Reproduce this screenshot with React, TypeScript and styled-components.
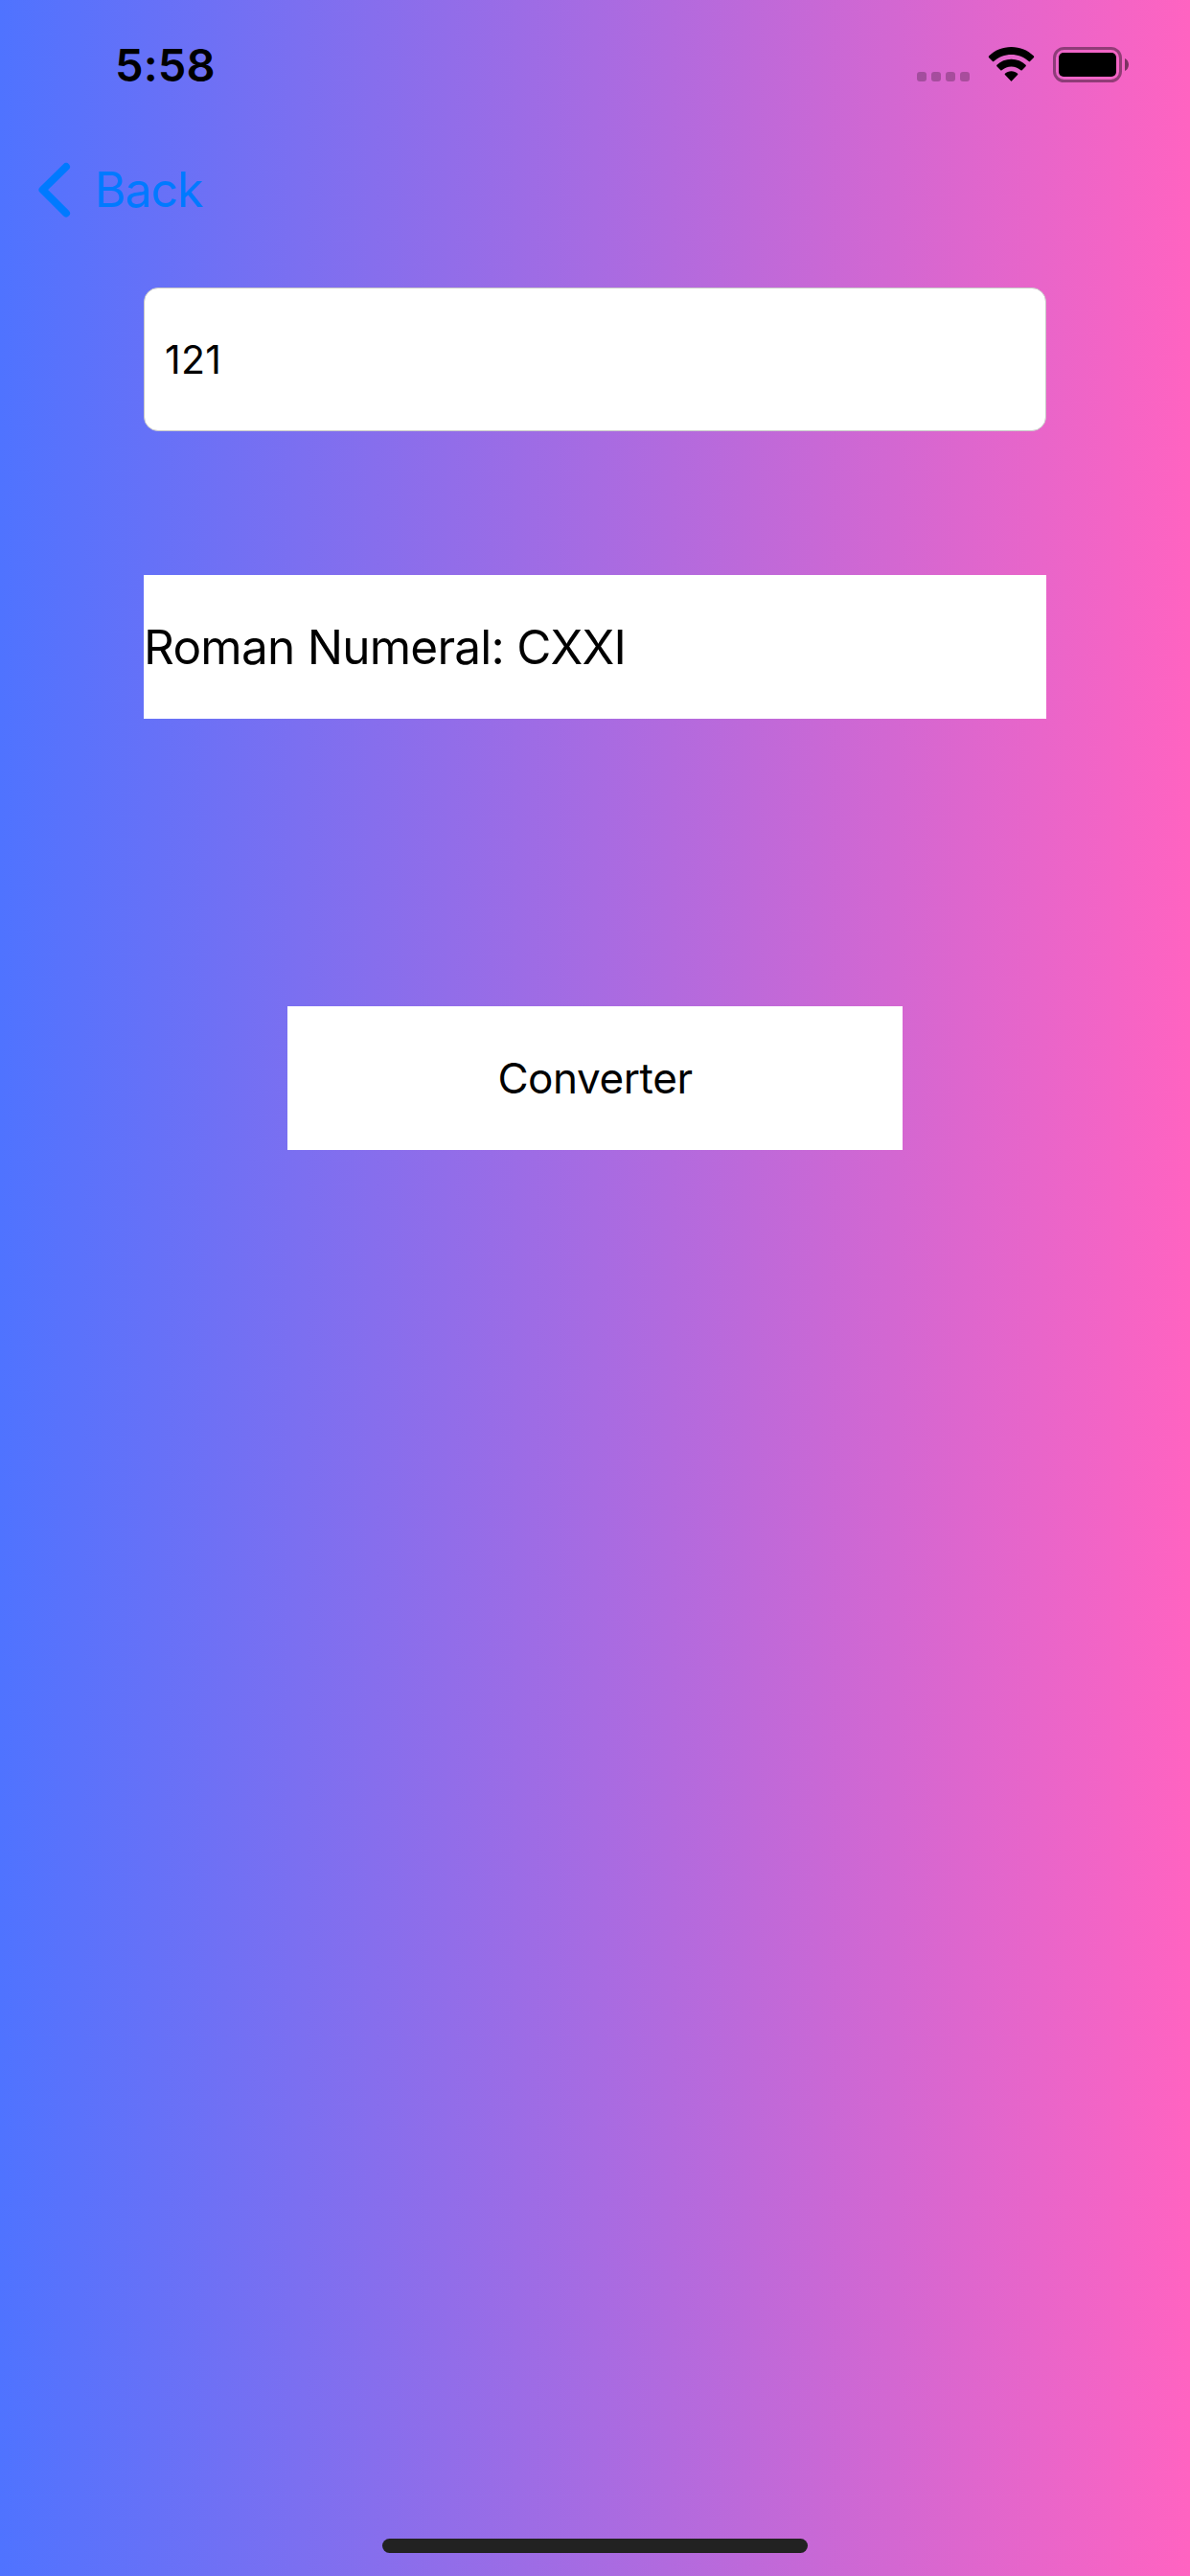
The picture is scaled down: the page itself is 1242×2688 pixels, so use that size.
import React, { useState } from "react";
import styled, { createGlobalStyle } from "styled-components";

const GlobalStyle = createGlobalStyle`
  *, *::before, *::after { box-sizing: border-box; }
  body { margin: 0; }
`;

const Screen = styled.div`
  display: flex;
  flex-direction: column;
  width: 1242px;
  height: 2688px;
  overflow: hidden;
  color: #000;
  font-family: Inter, "Liberation Sans", sans-serif;
  background: linear-gradient(90deg, #4f73ff 0%, #a76be2 50%, #ff63c1 100%);
`;

const StatusBar = styled.header`
  display: flex;
  justify-content: space-between;
  height: 132px;
  padding: 0 64px 0 120px;
`;

const Clock = styled.time`
  padding-top: 38px;
  font-size: 47px;
  font-weight: 600;
  line-height: 60px;
  letter-spacing: 0.1px;
`;

const StatusIcons = styled.div`
  display: flex;
  align-items: flex-start;
  padding-top: 49px;
`;

const SignalDots = styled.div`
  display: flex;
  gap: 5px;
  margin: 26px 19px 0 0;
`;

const Dot = styled.span`
  width: 10px;
  height: 10px;
  border-radius: 3px;
  background: rgba(0, 0, 0, 0.24);
`;

const WifiIcon = styled.svg`
  display: block;
  width: 49px;
  height: 37px;
  margin-right: 19px;
`;

const BatteryIcon = styled.svg`
  display: block;
  width: 79px;
  height: 37px;
`;

const NavBar = styled.nav`
  display: flex;
  height: 132px;
  padding: 0 38px;
`;

const BackButton = styled.button`
  display: flex;
  align-items: center;
  gap: 24px;
  height: 132px;
  padding: 0;
  border: 0;
  background: none;
  color: #007aff;
  font-family: inherit;
  font-size: 50px;
  line-height: 60px;
  letter-spacing: -1px;
`;

const Chevron = styled.svg`
  display: block;
  width: 37px;
  height: 60px;
`;

const Content = styled.main`
  display: flex;
  flex: 1;
  flex-direction: column;
  align-items: center;
  padding-top: 36px;
`;

const NumberField = styled.input`
  width: 942px;
  height: 150px;
  padding: 0 21px;
  border: 1px solid #c8c8c8;
  border-radius: 15px;
  outline: none;
  background: #fff;
  color: #000;
  font-family: inherit;
  font-size: 41px;
  letter-spacing: 0.3px;
`;

const Result = styled.output`
  display: flex;
  align-items: center;
  width: 942px;
  height: 150px;
  margin-top: 150px;
  background: #fff;
  font-size: 49.5px;
  line-height: 60px;
  letter-spacing: -0.75px;
  white-space: pre;
`;

const ConvertButton = styled.button`
  width: 642px;
  height: 150px;
  margin-top: 300px;
  padding: 0;
  border: 0;
  background: #fff;
  color: #000;
  font-family: inherit;
  font-size: 44px;
  line-height: 60px;
  letter-spacing: -0.4px;
`;

const HomeArea = styled.footer`
  display: flex;
  justify-content: center;
  height: 39px;
`;

const HomeIndicator = styled.div`
  width: 444px;
  height: 15px;
  border-radius: 8px;
  background: #222;
`;

const NUMERALS: [number, string][] = [
  [1000, "M"], [900, "CM"], [500, "D"], [400, "CD"], [100, "C"], [90, "XC"],
  [50, "L"], [40, "XL"], [10, "X"], [9, "IX"], [5, "V"], [4, "IV"], [1, "I"],
];

function toRoman(value: number): string {
  let rest = value;
  let roman = "";
  for (const [amount, symbol] of NUMERALS) {
    while (rest >= amount) {
      roman += symbol;
      rest -= amount;
    }
  }
  return roman;
}

export default function App() {
  const [value, setValue] = useState("121");
  const [roman, setRoman] = useState(toRoman(121));

  const convert = () => {
    const parsed = parseInt(value, 10);
    setRoman(parsed > 0 && parsed < 4000 ? toRoman(parsed) : "");
  };

  return (
    <Screen>
      <GlobalStyle />
      <StatusBar>
        <Clock>5:58</Clock>
        <StatusIcons>
          <SignalDots>
            <Dot /><Dot /><Dot /><Dot />
          </SignalDots>
          <WifiIcon viewBox="0 0 49 37">
            <path d="M24.5 0C33.6 0 42 3.4 48 9.6Q48.5 10.3 48 11L44 15Q43.4 15.5 42.8 15C37.8 10.4 31.4 7.9 24.5 7.9S11.2 10.4 6.2 15Q5.6 15.5 5 15L1 11Q.5 10.3 1 9.6C7 3.4 15.4 0 24.5 0Z" />
            <path d="M24.5 12.8C30.3 12.8 35.6 15 39.6 18.8Q40.2 19.5 39.6 20.2L35.7 24.2Q35.1 24.7 34.4 24.2C31.6 21.8 28.2 20.4 24.5 20.4S17.4 21.8 14.6 24.2Q13.9 24.7 13.3 24.2L9.4 20.2Q8.8 19.5 9.4 18.8C13.4 15 18.7 12.8 24.5 12.8Z" />
            <path d="M24.5 25.3C27.1 25.3 29.4 26.2 31.1 27.8Q31.7 28.4 31.1 29L24.9 35.6Q24.5 36 24.1 35.6L17.9 29Q17.3 28.4 17.9 27.8C19.6 26.2 21.9 25.3 24.5 25.3Z" />
          </WifiIcon>
          <BatteryIcon viewBox="0 0 79 37">
            <rect x="1.5" y="1.5" width="69" height="34" rx="10" fill="none" stroke="#000" strokeOpacity=".4" strokeWidth="3" />
            <rect x="6" y="6" width="60" height="25" rx="5" />
            <path d="M75 12C77.4 13 79 15.6 79 18.5S77.4 24 75 25Z" opacity=".5" />
          </BatteryIcon>
        </StatusIcons>
      </StatusBar>
      <NavBar>
        <BackButton>
          <Chevron viewBox="0 0 37 60" fill="none" stroke="currentColor" strokeWidth="8" strokeLinecap="round" strokeLinejoin="round">
            <path d="M31 6L6.5 30L31 54.5" />
          </Chevron>
          Back
        </BackButton>
      </NavBar>
      <Content>
        <NumberField value={value} onChange={(event) => setValue(event.target.value)} />
        <Result>Roman Numeral: {roman}</Result>
        <ConvertButton onClick={convert}>Converter</ConvertButton>
      </Content>
      <HomeArea>
        <HomeIndicator />
      </HomeArea>
    </Screen>
  );
}
